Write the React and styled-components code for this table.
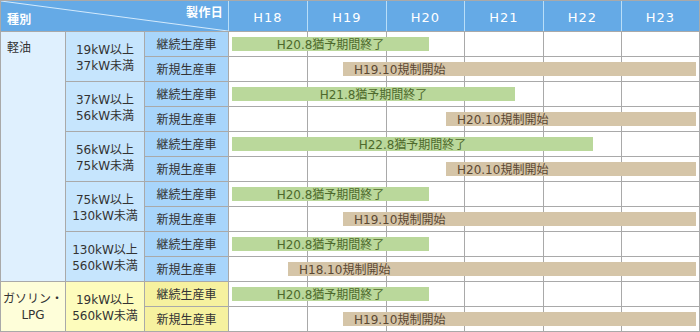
import React from "react";
import styled, { createGlobalStyle } from "styled-components";

const GlobalStyle = createGlobalStyle`
  html, body { margin: 0; padding: 0; background: #ffffff; }
  body { font-family: "DejaVu Sans", "Noto Sans CJK JP", sans-serif; }
`;

const LINE = "#a9a9a9";
const COLS = "64px 78px 83px 78px 78px 77px 78px 77px 77px";

const tones = {
  blue: ["#dff0fe", "#c6e5fd", "#a8d5fb"],
  yellow: ["#fefed9", "#fdfcbc", "#f6f19f"],
};

const Frame = styled.div`
  width: 698px;
  border: 1px solid ${LINE};
  background: ${LINE};
  display: flex;
  flex-direction: column;
  gap: 1px;
  font-family: "DejaVu Sans", "Noto Sans CJK JP", sans-serif;
  color: #333333;
`;

const HeaderGrid = styled.div`
  display: grid;
  grid-template-columns: 227px 78px 78px 77px 78px 77px 77px;
  column-gap: 1px;
  height: 30px;
  background: #b9def8;
`;

const CornerCell = styled.div`
  position: relative;
  display: grid;
  background: #65aae6;
  color: #ffffff;
  font-size: 12px;
  font-weight: bold;
  line-height: 14px;
`;

const Diagonal = styled.svg`
  position: absolute;
  inset: 0;
  width: 100%;
  height: 100%;
`;

const CornerLabel = styled.span`
  grid-area: 1 / 1;
  justify-self: ${(p) => (p.$end ? "end" : "start")};
  align-self: ${(p) => (p.$end ? "start" : "end")};
  margin: ${(p) => (p.$end ? "5px 5px 0 0" : "0 0 4px 6px")};
  letter-spacing: 0.3px;
  position: relative;
`;

const YearHead = styled.div`
  background: #65aae6;
  color: #ffffff;
  font-size: 13px;
  letter-spacing: 1px;
  display: flex;
  align-items: center;
  justify-content: center;
  padding-top: 2px;
  box-sizing: border-box;
`;

const BodyGrid = styled.div`
  display: grid;
  grid-template-columns: ${COLS};
  grid-template-rows: repeat(12, 24px);
  gap: 1px;
  background: ${LINE};
`;

const FuelCell = styled.div`
  grid-column: 1;
  grid-row: ${(p) => p.$row} / span ${(p) => p.$span};
  background: ${(p) => tones[p.$tone][0]};
  font-size: 12px;
  line-height: 16px;
  display: flex;
  align-items: ${(p) => (p.$center ? "center" : "flex-start")};
  justify-content: ${(p) => (p.$center ? "center" : "flex-start")};
  text-align: ${(p) => (p.$center ? "center" : "left")};
  padding: ${(p) => (p.$center ? "0" : "8px 6px")};
`;

const RangeCell = styled.div`
  grid-column: 2;
  grid-row: ${(p) => p.$row} / span 2;
  background: ${(p) => tones[p.$tone][1]};
  font-size: 12px;
  line-height: 16px;
  display: flex;
  align-items: center;
  justify-content: center;
  text-align: center;
  padding-top: 3px;
  box-sizing: border-box;
`;

const KindCell = styled.div`
  grid-column: 3;
  grid-row: ${(p) => p.$row};
  background: ${(p) => tones[p.$tone][2]};
  font-size: 12px;
  line-height: 14px;
  display: flex;
  align-items: center;
  justify-content: center;
  padding-top: 1px;
`;

const YearCell = styled.div`
  grid-column: ${(p) => p.$col};
  grid-row: ${(p) => p.$row};
  background: #ffffff;
`;

const BarTrack = styled.div`
  grid-column: 4 / 10;
  grid-row: ${(p) => p.$row};
  display: flex;
  align-items: center;
  position: relative;
  z-index: 1;
`;

const Bar = styled.div`
  height: 14px;
  box-sizing: border-box;
  display: flex;
  align-items: center;
  justify-content: ${(p) => (p.$kind === "grace" ? "center" : "flex-start")};
  padding-left: ${(p) => (p.$kind === "grace" ? "0" : "11px")};
  background: ${(p) => (p.$kind === "grace" ? "#bad89b" : "#d5c5a8")};
  color: ${(p) => (p.$kind === "grace" ? "#4e6a2c" : "#5b4832")};
  font-size: 12px;
  line-height: 14px;
  white-space: nowrap;
  padding-top: 1px;
`;

const years = ["H18", "H19", "H20", "H21", "H22", "H23"];

const ranges = [
  { lines: ["19kW以上", "37kW未満"], tone: "blue" },
  { lines: ["37kW以上", "56kW未満"], tone: "blue" },
  { lines: ["56kW以上", "75kW未満"], tone: "blue" },
  { lines: ["75kW以上", "130kW未満"], tone: "blue" },
  { lines: ["130kW以上", "560kW未満"], tone: "blue" },
  { lines: ["19kW以上", "560kW未満"], tone: "yellow" },
];

const g = (width, label) => ({ kind: "grace", left: 3, width, label });
const t = (left, label) => ({ kind: "start", left, width: 467 - left, label });

const bars = [
  g(197, "H20.8猶予期間終了"),
  t(114, "H19.10規制開始"),
  g(283, "H21.8猶予期間終了"),
  t(217, "H20.10規制開始"),
  g(361, "H22.8猶予期間終了"),
  t(217, "H20.10規制開始"),
  g(197, "H20.8猶予期間終了"),
  t(114, "H19.10規制開始"),
  g(197, "H20.8猶予期間終了"),
  t(59, "H18.10規制開始"),
  g(197, "H20.8猶予期間終了"),
  t(114, "H19.10規制開始"),
];

export default function App() {
  return (
    <>
      <GlobalStyle />
      <Frame>
        <HeaderGrid>
          <CornerCell>
            <Diagonal viewBox="0 0 227 30" preserveAspectRatio="none">
              <line x1="0" y1="0" x2="227" y2="30" stroke="#d3eafc" strokeWidth="1" />
            </Diagonal>
            <CornerLabel $end>製作日</CornerLabel>
            <CornerLabel>種別</CornerLabel>
          </CornerCell>
          {years.map((y) => (
            <YearHead key={y}>{y}</YearHead>
          ))}
        </HeaderGrid>
        <BodyGrid>
          <FuelCell $row={1} $span={10} $tone="blue">
            軽油
          </FuelCell>
          <FuelCell $row={11} $span={2} $tone="yellow" $center>
            ガソリン・
            <br />
            LPG
          </FuelCell>
          {ranges.map((r, i) => (
            <RangeCell key={i} $row={i * 2 + 1} $tone={r.tone}>
              {r.lines[0]}
              <br />
              {r.lines[1]}
            </RangeCell>
          ))}
          {bars.map((b, i) => {
            const row = i + 1;
            const tone = row > 10 ? "yellow" : "blue";
            return (
              <React.Fragment key={i}>
                <KindCell $row={row} $tone={tone}>
                  {i % 2 === 0 ? "継続生産車" : "新規生産車"}
                </KindCell>
                {years.map((y, c) => (
                  <YearCell key={y} $row={row} $col={c + 4} />
                ))}
                <BarTrack $row={row}>
                  <Bar $kind={b.kind} style={{ marginLeft: b.left, width: b.width }}>
                    {b.label}
                  </Bar>
                </BarTrack>
              </React.Fragment>
            );
          })}
        </BodyGrid>
      </Frame>
    </>
  );
}
